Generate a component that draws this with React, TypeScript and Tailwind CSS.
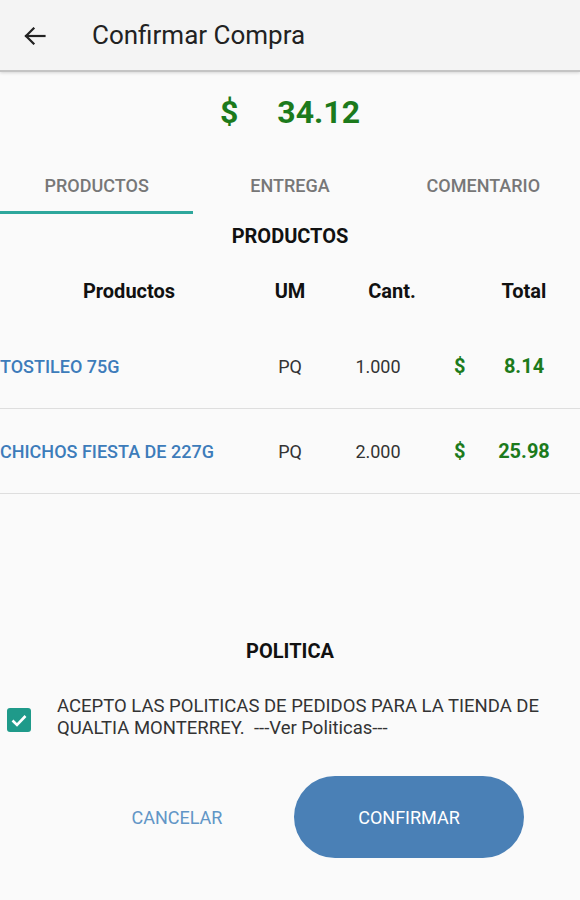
const rows = [
  { name: "TOSTILEO 75G", um: "PQ", qty: "1.000", total: "8.14" },
  { name: "CHICHOS FIESTA DE 227G", um: "PQ", qty: "2.000", total: "25.98" },
];

function BackArrow() {
  return (
    <svg width="22" height="18" viewBox="0 0 22 18" fill="none" stroke="#222" strokeWidth="2.2" strokeLinecap="square">
      <path d="M2 9h18.5" />
      <path d="M9.5 1.5 2 9l7.5 7.5" />
    </svg>
  );
}

export default function App() {
  return (
    <div className="flex h-[900px] w-[580px] flex-col overflow-hidden bg-[#fafafa] font-['Roboto',sans-serif]">
      <header className="flex h-[72px] shrink-0 items-center border-b-2 border-[#c4c4c4] bg-[#f4f4f4] shadow-[0_1px_3px_rgba(0,0,0,0.15)]">
        <span className="ml-[24px] mt-[1px]">
          <BackArrow />
        </span>
        <h1 className="ml-[46px] text-[26px] font-normal text-[#222]">Confirmar Compra</h1>
      </header>

      <div className="flex h-[80px] items-center justify-center gap-[39px] text-[32px] font-bold text-[#1c7a1c]">
        <span>$</span>
        <span>34.12</span>
      </div>

      <div className="grid h-[62px] grid-cols-3 text-[18px] font-medium text-[#777]">
        {["PRODUCTOS", "ENTREGA", "COMENTARIO"].map((t, i) => (
          <div key={t} className="flex flex-col">
            <div className="flex flex-1 items-center justify-center pt-[7px]">{t}</div>
            <div className={i === 0 ? "h-[3px] bg-[#2ea79c]" : "h-[3px]"} />
          </div>
        ))}
      </div>

      <div className="flex h-[44px] items-center justify-center text-[20px] font-bold text-[#111]">
        PRODUCTOS
      </div>

      <div className="flex h-[66px] items-center text-[20px] font-bold text-[#111]">
        <span className="w-[258px] text-center">Productos</span>
        <span className="w-[64px] text-center">UM</span>
        <span className="w-[112px] pl-[28px] text-center">Cant.</span>
        <span className="flex w-[146px]">
          <span className="w-[40px]" />
          <span className="w-[100px] text-center">Total</span>
        </span>
      </div>

      {rows.map((r) => (
        <div key={r.name} className="flex h-[85px] items-center border-b border-[#dedede]">
          <span className="w-[258px] whitespace-nowrap text-[18px] font-medium text-[#3d7cba]">{r.name}</span>
          <span className="w-[64px] text-center text-[18px] text-[#333]">{r.um}</span>
          <span className="w-[112px] text-center text-[18px] text-[#333]">{r.qty}</span>
          <span className="flex w-[146px] items-center text-[20px] font-bold text-[#1c7a1c]">
            <span className="w-[40px] pl-[20px]">$</span>
            <span className="w-[100px] text-center">{r.total}</span>
          </span>
        </div>
      ))}

      <div className="mt-[135px] flex h-[44px] items-center justify-center text-[20px] font-bold text-[#111]">
        POLITICA
      </div>

      <div className="mt-[22px] flex items-start">
        <span className="ml-[7px] mt-[13px] flex h-[24px] w-[24px] items-center justify-center rounded-[3px] bg-[#1f9a8a]">
          <svg width="20" height="20" viewBox="0 0 20 20" fill="none" stroke="#fff" strokeWidth="2.6">
            <path d="M3.5 10.5 8 15l8.5-9" />
          </svg>
        </span>
        <p className="ml-[26px] whitespace-nowrap text-[18.5px] leading-[22px] text-[#333]">
          ACEPTO LAS POLITICAS DE PEDIDOS PARA LA TIENDA DE
          <br />
          QUALTIA MONTERREY.{"\u00a0\u00a0"}---Ver Politicas---
        </p>
      </div>

      <div className="mt-[37px] flex items-center">
        <button className="w-[294px] pl-[60px] text-center text-[18px] text-[#6195c6]">CANCELAR</button>
        <button className="h-[82px] w-[230px] rounded-full bg-[#4a80b6] text-[18px] text-white">
          CONFIRMAR
        </button>
      </div>
    </div>
  );
}
